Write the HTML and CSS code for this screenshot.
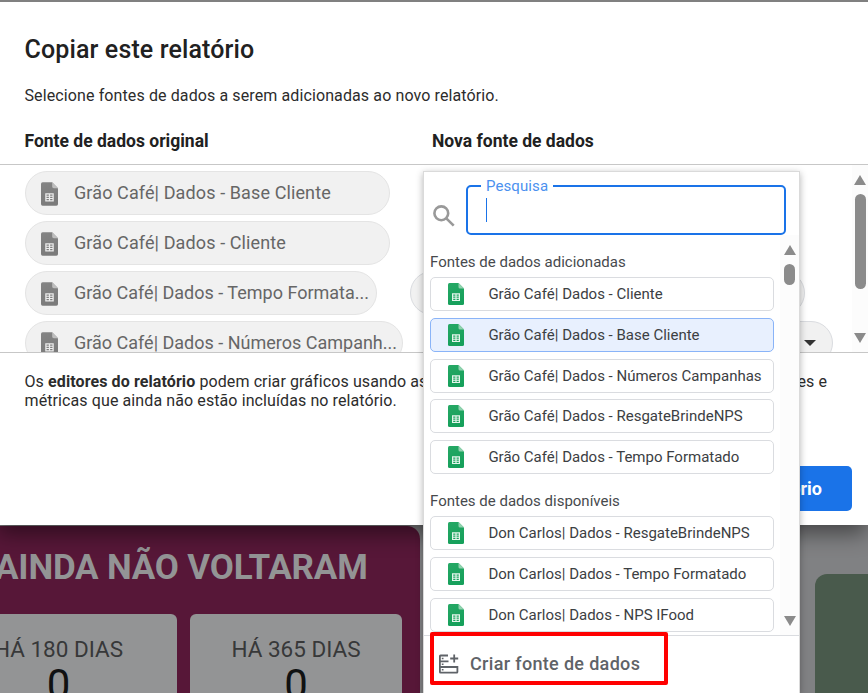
FILE: index.html
```html
<!DOCTYPE html>
<html lang="pt-BR">
<head>
<meta charset="utf-8">
<title>Copiar este relatório</title>
<link rel="stylesheet" href="styles.css">
</head>
<body>
<svg class="defs" aria-hidden="true">
  <linearGradient id="green" x1="0" y1="0" x2="0.3" y2="1"><stop offset="0" stop-color="#26a865"/><stop offset="1" stop-color="#16a05b"/></linearGradient>
  <symbol id="sheet" viewBox="0 0 16 22">
    <path class="sheet-body" d="M1.500 0H10.500L16 5.500V20.500Q16 22 14.500 22H1.500Q0 22 0 20.500V1.500Q0 0 1.500 0Z"/>
    <path class="sheet-fold" d="M10.500 0L16 5.500H12Q10.500 5.500 10.500 4Z"/>
    <path class="sheet-grid" fill-rule="evenodd" d="M4 10.300H12V18H4ZM5.200 11.500V12.700H7.400V11.500ZM8.600 11.500V12.700H10.800V11.500ZM5.200 13.600V14.800H7.400V13.600ZM8.600 13.600V14.800H10.800V13.600ZM5.200 15.700V16.900H7.400V15.700ZM8.600 15.700V16.900H10.800V15.700Z"/>
  </symbol>
</svg>

<main class="report">
  <section class="panel">
    <h2 class="panel-title">AINDA NÃO VOLTARAM</h2>
    <div class="cards">
      <div class="card first"><span class="card-label">HÁ 180 DIAS</span><span class="card-value">0</span></div>
      <div class="card"><span class="card-label">HÁ 365 DIAS</span><span class="card-value">0</span></div>
    </div>
  </section>
  <section class="panel-green"></section>
</main>

<div class="dialog">
  <h1 class="title">Copiar este relatório</h1>
  <p class="intro">Selecione fontes de dados a serem adicionadas ao novo relatório.</p>
  <div class="heads"><span class="head-left">Fonte de dados original</span><span class="head-right">Nova fonte de dados</span></div>
  <div class="sources">
    <div class="rows">
      <div class="row"><div class="chip w1"><svg class="sheet gray"><use href="#sheet"/></svg><span class="chip-text">Grão Café| Dados - Base Cliente</span></div></div>
      <div class="row"><div class="chip w1"><svg class="sheet gray"><use href="#sheet"/></svg><span class="chip-text">Grão Café| Dados - Cliente</span></div></div>
      <div class="row"><div class="chip w2"><svg class="sheet gray"><use href="#sheet"/></svg><span class="chip-text">Grão Café| Dados - Tempo Formata...</span></div><div class="chip target t1"></div></div>
      <div class="row"><div class="chip w3"><svg class="sheet gray"><use href="#sheet"/></svg><span class="chip-text">Grão Café| Dados - Números Campanh...</span></div><div class="chip target t2"><i class="caret"></i></div></div>
    </div>
    <div class="scroll outer"><i class="up"></i><i class="thumb"></i><i class="down"></i></div>
  </div>
  <p class="note"><span class="line">Os <b>editores do relatório</b> podem criar gráficos usando as</span><span class="line-end">es e</span><br><span class="line two">métricas que ainda não estão incluídas no relatório.</span></p>
  <div class="actions"><button class="copy">Copiar relatório</button></div>
</div>

<div class="menu">
  <div class="search">
    <svg class="lens" viewBox="0 0 22 22"><circle cx="8.300" cy="8.300" r="6.900"/><path d="M13.300 13.300L20.700 20.700"/></svg>
    <fieldset class="field"><legend>Pesquisa</legend><i class="cursor"></i></fieldset>
  </div>
  <div class="results">
    <div class="list">
      <div class="group">Fontes de dados adicionadas</div>
      <div class="item"><svg class="sheet"><use href="#sheet"/></svg><span>Grão Café| Dados - Cliente</span></div>
      <div class="item active"><svg class="sheet"><use href="#sheet"/></svg><span>Grão Café| Dados - Base Cliente</span></div>
      <div class="item"><svg class="sheet"><use href="#sheet"/></svg><span>Grão Café| Dados - Números Campanhas</span></div>
      <div class="item"><svg class="sheet"><use href="#sheet"/></svg><span>Grão Café| Dados - ResgateBrindeNPS</span></div>
      <div class="item"><svg class="sheet"><use href="#sheet"/></svg><span>Grão Café| Dados - Tempo Formatado</span></div>
      <div class="group second">Fontes de dados disponíveis</div>
      <div class="item"><svg class="sheet"><use href="#sheet"/></svg><span>Don Carlos| Dados - ResgateBrindeNPS</span></div>
      <div class="item"><svg class="sheet"><use href="#sheet"/></svg><span>Don Carlos| Dados - Tempo Formatado</span></div>
      <div class="item"><svg class="sheet"><use href="#sheet"/></svg><span>Don Carlos| Dados - NPS IFood</span></div>
    </div>
    <div class="scroll inner"><i class="up"></i><i class="thumb"></i><i class="down"></i></div>
  </div>
  <div class="create">
    <svg class="db" viewBox="0 0 20 20"><path d="M9 1.500H1.500Q.9 1.500 .9 2.100V18Q.9 18.600 1.500 18.600H17.800Q18.400 18.600 18.400 18V13H.9M.9 7.300H9.500M15.200 .5V8.500M11.200 4.500H19.200"/><path class="dots" d="M2.800 4.400H4.500M2.800 10.200H4.500M2.800 15.800H4.500"/></svg>
    <span class="create-text">Criar fonte de dados</span>
  </div>
</div>
<div class="highlight"></div>
</body>
</html>
```

FILE: styles.css
```css
* { box-sizing: border-box; }
body { margin: 0; width: 868px; height: 693px; overflow: hidden; position: relative; background: #808183; font-family: Roboto, "Liberation Sans", sans-serif; color: #212121; }
.defs { position: absolute; width: 0; height: 0; }
.report { height: 693px; padding-top: 526px; display: flex; justify-content: space-between; overflow: hidden; }
.panel { width: 420px; height: 167px; background: #571738; border-radius: 0 13px 0 0; overflow: hidden; }
.panel-title { margin: 20px 0 0 -5px; font-size: 35px; line-height: 44px; letter-spacing: -.18px; font-weight: 700; color: #939495; white-space: nowrap; }
.cards { display: flex; gap: 13px; margin-top: 24px; margin-left: -60px; }
.card { width: 212px; height: 110px; border-radius: 6px; background: #939495; display: flex; flex-direction: column; align-items: center; padding-top: 20px; flex: none; }
.first { width: 237px; }
.card-label { font-size: 22.500px; line-height: 30px; color: #373839; }
.card-value { font-size: 42px; line-height: 42px; color: #101112; }
.panel-green { width: 53px; height: 130px; margin-top: 48px; background: #495a4c; border-radius: 12px 0 0 0; }

.dialog { position: absolute; left: 0; top: 0; width: 868px; height: 525px; background: #fff; border-top: 2px solid #808080; box-shadow: -2px 9px 20px rgba(0,0,0,.45); padding-top: 32px; }
.title { margin: 0 0 0 24.500px; font-size: 25px; line-height: 32px; letter-spacing: .13px; font-weight: 500; }
.intro { margin: 20px 0 0 24.500px; font-size: 16px; line-height: 20px; letter-spacing: .11px; color: #2c2c2c; }
.heads { display: flex; margin: 24px 0 0 24.500px; height: 34px; font-size: 17.500px; line-height: 22px; font-weight: 700; }
.head-left { width: 407.500px; }
.sources { height: 189px; border-top: 1px solid #c7c7c7; border-bottom: 1px solid #c7c7c7; display: flex; justify-content: space-between; overflow: hidden; }
.rows { padding: 6px 0 0 25px; display: flex; flex-direction: column; gap: 6px; }
.row { display: flex; width: 820px; }
.chip { height: 44px; border: 1px solid #e4e4e4; border-radius: 22px; background: #f1f1f1; display: flex; align-items: center; padding-left: 15px; flex: none; }
.w1 { width: 365px; } .w2 { width: 352px; } .w3 { width: 378px; }
.target { border-color: #dadce0; }
.t1 { width: 395px; margin-left: 33px; }
.t2 { width: 395px; margin-left: 35px; justify-content: flex-end; padding-right: 16px; }
.caret { border: 6px solid transparent; border-top: 6px solid #333; border-bottom: 0; }
.sheet { width: 16px; height: 22px; flex: none; }
.sheet-body { fill: url(#green); }
.sheet-fold { fill: #91d2af; }
.sheet-grid { fill: #e4f5ec; }
.gray { width: 17px; height: 24px; margin-top: 2px; filter: grayscale(1) brightness(.98); }
.chip-text { margin-left: 16px; font-size: 18px; line-height: 24px; color: #666; white-space: pre; }
.w1 .chip-text { letter-spacing: .11px; }
.scroll { display: flex; flex-direction: column; align-items: center; background: #fcfcfc; }
.up, .down { border: 6px solid transparent; }
.up { border-top: 0; border-bottom: 10px solid #8b8b8b; }
.down { border-bottom: 0; border-top: 10px solid #8b8b8b; }
.thumb { width: 11px; border-radius: 6px; background: #8b8b8b; }
.outer { width: 16px; padding-top: 10px; }
.outer .thumb { height: 95px; margin: 9px 0 44px; }
.note { margin: 19px 0 0 24.500px; font-size: 16px; line-height: 19px; letter-spacing: .1px; color: #2c2c2c; white-space: nowrap; }
.line { display: inline-block; width: 773px; }
.line-end { display: inline-block; }
.actions { display: flex; justify-content: flex-end; padding: 56px 16px 0 0; }
.copy { width: 170px; height: 45px; border: 0; border-radius: 5px; background: #1a73e8; color: #fff; font: 700 18px Roboto, sans-serif; text-align: right; padding: 0 30px 0 0; }

.menu { position: absolute; left: 423px; top: 171px; width: 377px; height: 522px; background: #fff; border: 1px solid #dadada; border-bottom: 0; box-shadow: 0 2px 7px rgba(0,0,0,.3); }
.search { height: 63px; display: flex; padding: 5px 13px 0 9px; }
.lens { width: 22px; height: 22px; margin-top: 28px; fill: none; stroke: #999; stroke-width: 2.6; }
.field { width: 320px; height: 58px; margin: 0 0 0 11px; padding: 0 0 0 18px; border: 2px solid #1a73e8; border-radius: 5px; min-width: 0; }
.field legend { margin-left: -5px; padding: 0 5px; font-size: 15px; line-height: 18px; letter-spacing: .1px; color: #4b91ef; }
.cursor { display: block; width: 1px; height: 24px; margin-top: 3px; background: #1a73e8; }
.results { display: flex; height: 401px; border-bottom: 1px solid #dadce0; }
.list { padding: 17px 0 0 6px; width: 356px; }
.group { font-size: 15px; line-height: 20px; height: 25px; color: #474a4d; white-space: pre; }
.second { margin-top: 17px; height: 25px; }
.item { width: 344px; height: 34px; border: 1px solid #dadce0; border-radius: 5px; display: flex; align-items: center; padding-left: 17px; margin-bottom: 6.800px; font-size: 15px; color: #3c4043; white-space: pre; }
.item span { margin-left: 24.400px; }
.active { background: #e8f0fe; border-color: #8ab4f8; }
.inner { width: 19px; padding-top: 10px; }
.inner .thumb { height: 21px; margin: 9px 0 331px; }
.create { display: flex; align-items: center; height: 55px; padding-left: 15px; }
.db { width: 20px; height: 20px; fill: none; stroke: #5f6368; stroke-width: 1.800; }
.dots { stroke-width: 1.500; }
.create-text { margin-left: 11px; font-size: 18px; letter-spacing: .33px; font-weight: 500; color: #5f6368; white-space: pre; }
.highlight { position: absolute; left: 430px; top: 632px; width: 238px; height: 53px; border: 4px solid #f00; border-radius: 2px; }
```
